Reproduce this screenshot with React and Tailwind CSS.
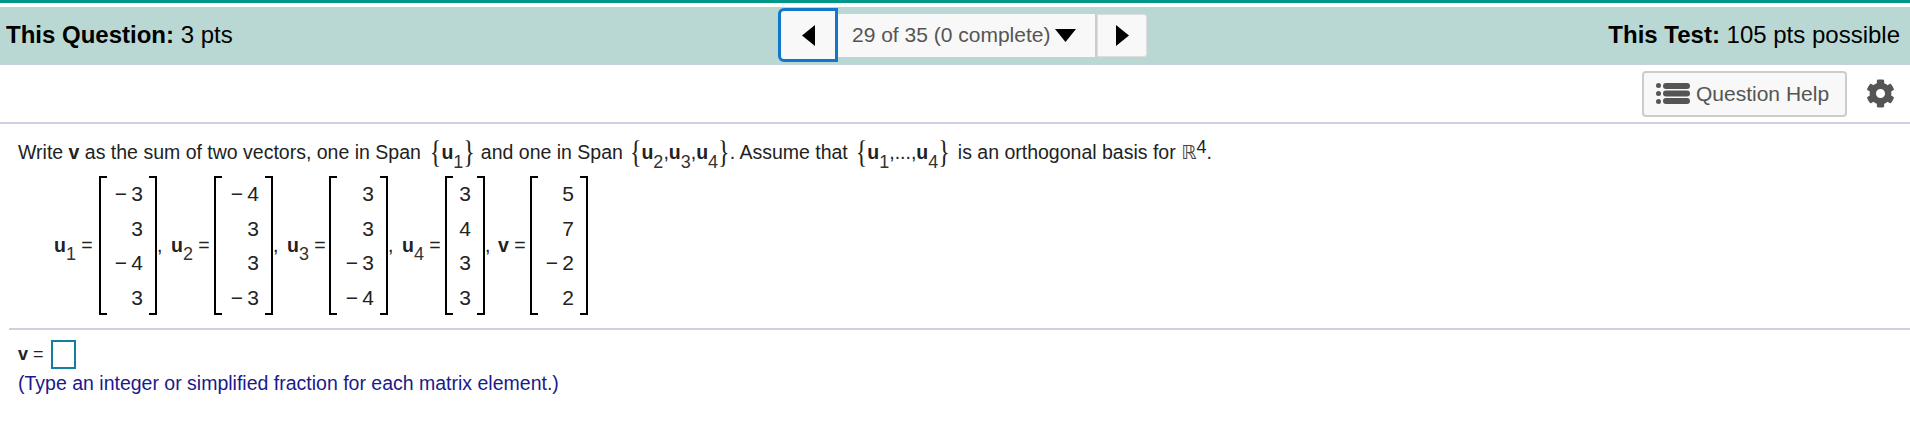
import React from 'react'
import { FaCog } from 'react-icons/fa'

function Triangle({ dir, className }) {
  const points = { left: '13,0 13,26 0,13', right: '0,0 13,13 0,26', down: '0,0 21,0 10.5,13' }
  const box = dir === 'down' ? '0 0 21 13' : '0 0 13 26'
  return (
    <svg viewBox={box} className={className} preserveAspectRatio="none">
      <polygon points={points[dir]} fill="#000" />
    </svg>
  )
}

function ListIcon() {
  return (
    <svg viewBox="0 0 34 21" className="h-[21px] w-[34px]" fill="#555">
      <circle cx="2.5" cy="2.5" r="2.5" />
      <circle cx="2.5" cy="10.5" r="2.5" />
      <circle cx="2.5" cy="18.5" r="2.5" />
      <rect x="7" y="0" width="27" height="6" rx="3" />
      <rect x="7" y="7.5" width="27" height="6" rx="3" />
      <rect x="7" y="15" width="27" height="6" rx="3" />
    </svg>
  )
}

function Vec({ name, sub }) {
  return (
    <span className="whitespace-nowrap">
      <b>{name}</b>
      {sub && <sub className="align-[-4px] text-[18px] leading-none text-[#333]">{sub}</sub>}
    </span>
  )
}

function Brace({ children }) {
  return (
    <span className="inline-block translate-y-[2px] scale-y-[1.3] font-['Liberation_Serif',serif] text-[24px] leading-none">
      {children}
    </span>
  )
}

function Matrix({ values, className }) {
  return (
    <div className={`flex h-[139px] ${className}`}>
      <div className="w-[8px] border-y-2 border-l-2 border-black" />
      <div className="flex flex-1 flex-col justify-around pr-[6px] text-right text-[21px] leading-none text-[#222]">
        {values.map((v, i) => (
          <span key={i}>{v < 0 ? <>−&thinsp;{-v}</> : v}</span>
        ))}
      </div>
      <div className="w-[8px] border-y-2 border-r-2 border-black" />
    </div>
  )
}

export default function App() {
  return (
    <div className="h-[441px] w-[1910px] overflow-hidden bg-white font-['Liberation_Sans',Arial,sans-serif] text-[#222]">
      <div className="h-[3px] bg-[#009688]" />
      <div className="mt-[4px] flex h-[58px] items-center border-b border-[#c8d0dc] bg-[#bad8d3] pb-[1px] text-[24px] text-black">
        <div className="w-[778px] pl-[6px]">
          <b>This Question:</b> 3 pts
        </div>
        <div className="flex h-[43px] items-center">
          <button className="-my-[6px] flex h-[54px] w-[60px] items-center justify-center rounded-l-[6px] border-[3px] border-[#1177cc] bg-[#f8f8f8]">
            <Triangle dir="left" className="h-[21px] w-[13px]" />
          </button>
          <div className="flex h-[43px] w-[259px] items-center gap-[5px] border-r-2 border-[#cccccc] bg-[#f8f8f8] pl-[14px] text-[21px] text-[#555]">
            <span>29 of 35 (0 complete)</span>
            <Triangle dir="down" className="h-[13px] w-[21px]" />
          </div>
          <button className="flex h-[43px] w-[50px] items-center justify-center rounded-r-[3px] border border-[#dddddd] bg-[#f8f8f8]">
            <Triangle dir="right" className="h-[21px] w-[13px]" />
          </button>
        </div>
        <div className="flex-1 pr-[10px] text-right">
          <b>This Test:</b> 105 pts possible
        </div>
      </div>

      <div className="flex h-[59px] items-center justify-end border-b-2 border-[#ccd0e0] pr-[15px]">
        <button className="flex h-[46px] w-[205px] items-center gap-[6px] rounded-[4px] border-2 border-[#cccccc] bg-[#f8f8f8] pl-[12px] text-[21px] text-[#555]">
          <ListIcon />
          Question Help
        </button>
        <FaCog className="ml-[19px] text-[29px] text-[#555]" />
      </div>

      <div className="mt-[13px] flex h-[32px] items-center whitespace-pre pl-[18px] text-[19.5px] text-[#222]">
        <span>Write <b>v</b> as the sum of two vectors, one in Span</span>
        <span className="ml-[9px]"><Brace>{'{'}</Brace><Vec name="u" sub="1" /><Brace>{'}'}</Brace></span>
        <span className="ml-[6px]">and one in Span</span>
        <span className="ml-[7px]"><Brace>{'{'}</Brace><Vec name="u" sub="2" />,<Vec name="u" sub="3" />,<Vec name="u" sub="4" /><Brace>{'}'}</Brace></span>
        <span>. Assume that</span>
        <span className="ml-[8px]"><Brace>{'{'}</Brace><Vec name="u" sub="1" />,...,<Vec name="u" sub="4" /><Brace>{'}'}</Brace></span>
        <span className="ml-[8px]">is an orthogonal basis for </span>
        <span className="font-['DejaVu_Sans',sans-serif] text-[#444]">ℝ</span>
        <sup className="top-[-6px] text-[18px] leading-none">4</sup>
        <span>.</span>
      </div>

      <div className="mt-[7px] flex h-[139px] items-center pl-[54px] text-[19.5px]">
        <span className="w-[45px]"><Vec name="u" sub="1" /> =</span>
        <Matrix values={[-3, 3, -4, 3]} className="w-[58px]" />
        <span className="w-[14px]">,</span>
        <span className="w-[43px]"><Vec name="u" sub="2" /> =</span>
        <Matrix values={[-4, 3, 3, -3]} className="w-[59px]" />
        <span className="w-[14px]">,</span>
        <span className="w-[42px]"><Vec name="u" sub="3" /> =</span>
        <Matrix values={[3, 3, -3, -4]} className="w-[59px]" />
        <span className="w-[14px]">,</span>
        <span className="w-[43px]"><Vec name="u" sub="4" /> =</span>
        <Matrix values={[3, 4, 3, 3]} className="w-[40px]" />
        <span className="w-[13px]">,</span>
        <span className="w-[32px]"><b>v</b> =</span>
        <Matrix values={[5, 7, -2, 2]} className="w-[58px]" />
      </div>

      <div className="ml-[9px] mt-[13px] h-[2px] bg-[#ccd0e0]" />

      <div className="mt-[10px] flex items-center pl-[18px] text-[18px]">
        <span className="w-[32.5px]"><b>v</b> =</span>
        <div className="h-[29px] w-[25px] border-2 border-[#137f9b]" />
      </div>
      <p className="ml-[18px] mt-[3px] text-[19.5px] leading-[22px] text-[#1a1a8c]">
        (Type an integer or simplified fraction for each matrix element.)
      </p>
    </div>
  )
}
